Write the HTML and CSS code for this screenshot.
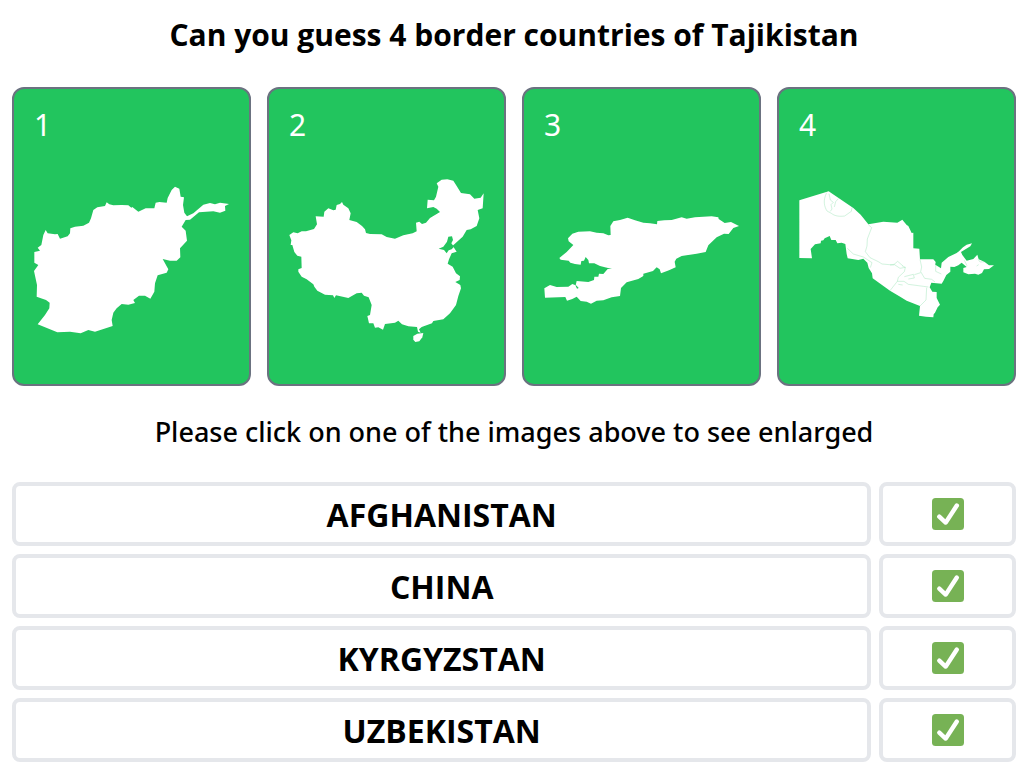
FILE: index.html
```html
<!DOCTYPE html>
<html lang="en">
<head>
  <meta charset="UTF-8">
  <meta name="viewport" content="width=device-width, initial-scale=1">
  <title>Border countries</title>
  <link rel="stylesheet" href="styles.css">
</head>
<body>
  <!-- Check mark shared by all the result boxes -->
  <svg class="defs" aria-hidden="true">
    <symbol id="check" viewBox="0 0 36 36">
      <path fill="#77b255" d="M36 32a4 4 0 0 1-4 4H4a4 4 0 0 1-4-4V4a4 4 0 0 1 4-4h28a4 4 0 0 1 4 4v28z"/>
      <path fill="#fff" d="M29.3 6.4a2.5 2.5 0 0 0-3.46.72L14.94 23.88l-5.03-4.65a2.5 2.5 0 1 0-3.4 3.67l7.21 6.67c.48.44 1.09.66 1.7.66.84 0 1.59-.35 2.1-1.14L30.02 9.85a2.5 2.5 0 0 0-.72-3.46z"/>
    </symbol>
  </svg>

  <main>
    <h1>Can you guess 4 border countries of Tajikistan</h1>

    <div class="cards">
      <button type="button" class="card">
        <span class="number">1</span>
        <svg class="map" viewBox="42 -21 585 585" aria-hidden="true">
          <path d="M53 463 75 435 88 415 89 398 78 390 50 380 51 345 42 303 55 285 43 278 43 246 60 242 53 233 64 225 70 195 77 180 83 190 105 193 113 192 120 206 143 199 150 190 151 175 165 170 190 167 207 158 213 145 220 120 232 112 255 108 260 97 268 103 280 106 305 105 325 106 334 113 337 111 355 125 377 115 403 115 407 98 418 96 440 98 443 84 455 60 465 50 478 56 482 80 492 82 489 105 493 128 501 139 520 130 550 104 570 99 585 103 600 98 627 102 615 108 616 122 600 128 580 124 537 127 510 149 497 150 485 170 497 182 501 212 480 235 481 262 470 272 450 272 428 267 445 298 440 308 413 316 405 340 403 365 391 386 375 377 357 377 340 390 345 399 325 404 305 402 290 415 280 428 275 450 278 468 225 485 205 480 182 490 150 485 112 487Z"/>
        </svg>
      </button>
      <button type="button" class="card">
        <span class="number">2</span>
        <svg class="map" viewBox="27 -21 585 585" aria-hidden="true">
          <path d="M28 195 40 187 53 190 65 184 78 184 102 177 111 163 107 139 131 140 133 125 145 115 160 121 167 119 170 105 180 102 186 96 190 104 205 115 212 130 208 150 230 156 246 168 255 178 258 189 270 192 305 193 320 201 345 206 370 196 398 190 410 184 408 158 418 155 426 162 438 158 450 144 480 126 470 116 460 111 441 115 443 89 462 91 468 80 475 50 470 40 485 29 502 28 520 32 530 48 543 69 570 73 583 86 602 83 611 70 608 115 593 120 598 145 590 168 572 178 560 180 548 200 518 227 530 245 515 250 507 268 503 281 518 290 528 310 540 319 539 330 526 336 541 345 543 355 535 378 528 405 510 430 490 448 460 453 456 460 425 471 417 478 422 488 414 485 411 471 385 469 366 463 355 452 345 458 315 462 309 479 295 472 285 473 280 460 267 460 262 438 270 435 275 405 266 382 252 377 245 368 230 370 205 384 168 376 163 384 159 376 135 374 112 362 103 350 100 343 80 328 65 320 55 305 55 298 65 294 64 260 52 257 43 246 37 225 32 225 34 211Z"/>
          <path d="M400 498 412 491 430 489 427 502 418 514 406 516 400 509Z"/>
          <path class="water" d="M476 236 490 230 501 215 505 200 516 199 519 210 514 220 522 230 515 238 506 241 500 250 492 240Z"/>
        </svg>
      </button>
      <button type="button" class="card">
        <span class="number">3</span>
        <svg class="map" viewBox="27 -111 585 585" aria-hidden="true">
          <path d="M73 174 95 156 115 135 101 124 99 115 112 101 130 95 165 94 185 98 205 100 220 106 227 105 226 78 235 64 255 60 278 53 300 61 325 68 345 70 366 73 367 63 388 61 410 60 440 52 455 56 480 52 530 49 550 52 551 57 569 69 588 66 612 78 595 84 581 102 567 101 545 112 520 136 512 156 485 161 440 168 424 176 419 185 422 202 402 211 378 220 374 208 365 202 354 213 325 221 325 228 310 237 275 247 258 264 255 288 230 292 205 301 185 302 168 311 155 305 137 303 125 290 112 297 96 302 91 291 30 293 28 265 45 255 65 261 100 260 112 252 122 256 125 243 160 246 177 240 178 230 190 230 192 221 205 222 218 207 231 207 195 198 178 190 162 190 160 180 152 171 147 182 139 183 137 194 120 192 106 188 101 182 77 179Z"/>
          <path class="water" d="M121 255 125 257 131 264 126 266Z"/>
        </svg>
      </button>
      <button type="button" class="card">
        <span class="number">4</span>
        <svg class="map" viewBox="27 -51 585 585" aria-hidden="true">
          <path d="M28 61 116 34 128 42 190 84 212 104 235 133 280 125 322 128 337 119 350 135 355 138 365 159 370 158 370 205 388 206 390 238 430 238 437 246 436 254 453 265 455 248 475 231 500 219 507 214 519 202 530 194 546 190 541 199 513 216 517 225 530 242 550 237 562 224 566 238 583 245 597 256 612 256 597 267 582 268 576 279 565 284 555 281 535 283 520 277 520 264 530 261 515 248 505 256 493 261 481 260 481 275 469 285 460 303 455 311 424 308 419 322 427 335 440 336 440 354 450 374 443 382 435 398 431 403 430 412 408 410 387 407 390 378 350 362 328 349 300 332 248 295 246 280 236 264 232 248 220 236 205 240 173 235 170 222 166 192 155 188 142 190 137 180 124 180 119 168 104 175 100 181 93 182 92 190 75 193 62 207 66 235 28 234Z"/>
          <g class="borders">
            <path d="M110 38C98 62 103 80 111 93L124 100C135 109 150 110 164 108L184 94 186 83"/>
            <path d="M117 41 121 60 130 67 123 74 126 87 121 94M145 56 137 65 133 81"/>
            <path d="M235 134 245 143 232 177 231 198 226 215 240 233 265 245 276 252 310 255 323 244 338 257"/>
            <path d="M172 205 190 222 220 231 246 248 241 263M300 255 312 253 330 265 346 262 343 275 325 292 322 304 300 332"/>
            <path d="M336 257 346 262M322 304 342 304 355 313 400 319 415 321M390 238 395 261 392 275 404 295 425 298 435 306"/>
            <path d="M343 290 370 283 373 294 355 297M373 284 392 278M325 313 338 315M410 323 408 360 390 378M437 250 437 274 454 282M560 258 566 254M523 241 531 257M565 239 570 246 585 245"/>
          </g>
        </svg>
      </button>
    </div>

    <p class="hint">Please click on one of the images above to see enlarged</p>

    <div class="guesses">
      <div class="box name">AFGHANISTAN</div>
      <div class="box"><svg class="check" role="img" aria-label="Correct"><use href="#check"/></svg></div>
      <div class="box name">CHINA</div>
      <div class="box"><svg class="check" role="img" aria-label="Correct"><use href="#check"/></svg></div>
      <div class="box name">KYRGYZSTAN</div>
      <div class="box"><svg class="check" role="img" aria-label="Correct"><use href="#check"/></svg></div>
      <div class="box name">UZBEKISTAN</div>
      <div class="box"><svg class="check" role="img" aria-label="Correct"><use href="#check"/></svg></div>
    </div>
  </main>
</body>
</html>
```
FILE: styles.css
```css
* {
  box-sizing: border-box;
}
body {
  margin: 0;
  background: #fff;
  color: #000;
  font-family: "Segoe UI", "Open Sans", "Noto Sans", sans-serif;
}
.defs {
  display: none;
}
main {
  padding: 16px 10px 10px 12px;
}
h1 {
  margin: 0 0 34px;
  font-size: 30px;
  line-height: 37px;
  font-weight: 700;
  text-align: center;
}
/* Country cards */
.cards {
  display: grid;
  grid-template-columns: repeat(4, 1fr);
  gap: 16px;
}
.card {
  display: flex;
  flex-direction: column;
  padding: 16px 20px 26px;
  border: 2px solid #6b7280;
  border-radius: 12px;
  background: #22c55e;
  color: #fff;
  font-family: "Segoe UI", "Noto Sans", sans-serif;
  font-size: 30px;
  line-height: 40px;
  text-align: left;
  cursor: pointer;
}
.number {
  margin-bottom: 18px;
}
.map {
  display: block;
  width: 100%;
  aspect-ratio: 1;
  fill: #fff;
}
.water {
  fill: #22c55e;
}
.borders {
  fill: none;
  stroke: #22c55e;
  stroke-width: 1px;
  opacity: 0.6;
}
.hint {
  margin: 28px 0 32px;
  font-family: "Segoe UI", "Noto Sans", sans-serif;
  font-size: 27px;
  line-height: 36px;
  font-weight: 500;
  text-align: center;
}
/* Guess rows */
.guesses {
  display: grid;
  grid-template-columns: repeat(7, 1fr);
  gap: 8px;
}
.box {
  display: flex;
  align-items: center;
  justify-content: center;
  height: 64px;
  border: 4px solid #e5e7eb;
  border-radius: 8px;
}
.name {
  grid-column: span 6;
  padding-top: 2px;
  font-size: 32px;
  line-height: 40px;
  font-weight: 700;
}
.check {
  width: 32px;
  height: 32px;
}
```
